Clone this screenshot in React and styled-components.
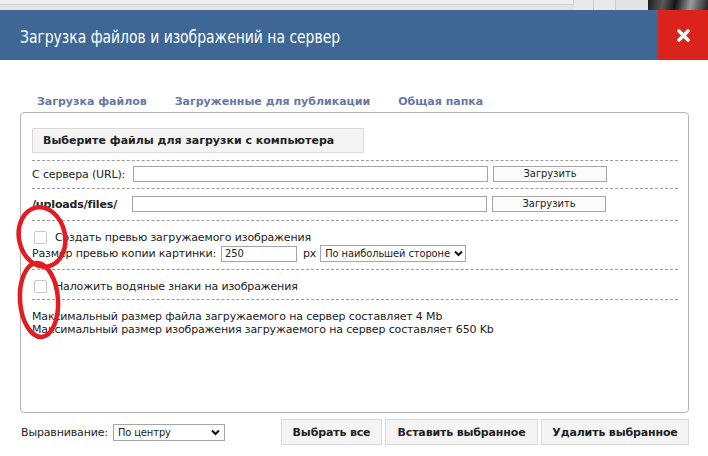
import React from "react";
import styled, { createGlobalStyle } from "styled-components";

const GlobalStyle = createGlobalStyle`
  html, body {
    margin: 0;
    padding: 0;
    background: #ffffff;
  }
  body {
    font-family: "DejaVu Sans", Verdana, sans-serif;
    font-size: 11px;
    letter-spacing: -0.15px;
    color: #222;
  }
`;

const Page = styled.div`
  position: relative;
  width: 708px;
  height: 456px;
  overflow: hidden;
  background: #fff;
`;

// strip of the page behind the dialog
const TopStrip = styled.div`
  display: flex;
  height: 10px;
  background: #e4e4e4;
`;
const StripBox = styled.div`
  width: 573px;
  height: 4px;
  background: #efefef;
  border-bottom: 1px solid #d6d6d6;
  border-right: 1px solid #d6d6d6;
`;
const StripCells = styled.div`
  display: flex;
  flex: 1;
`;
const StripCell = styled.div`
  width: ${(p) => p.w}px;
  border-right: 1px solid #cfcfcf;
  background: #e9e9e9;
`;
const StripImage = styled.div`
  width: 60px;
  margin-left: auto;
  background: linear-gradient(100deg, #1c1c1c 0%, #5a5a5a 25%, #141414 45%, #9a9a9a 70%, #222 100%);
`;

const Header = styled.div`
  display: flex;
  align-items: stretch;
  height: 50px;
  background: #3e6795;
`;
const Title = styled.div`
  flex: 1;
  display: flex;
  align-items: center;
  padding: 2px 0 0 20px;
  color: #fff;
  font-family: "Liberation Sans Narrow", "DejaVu Sans Condensed", sans-serif;
  font-size: 18px;
  letter-spacing: 0;
  span {
    display: inline-block;
    transform: scaleX(0.86);
    transform-origin: left center;
    white-space: nowrap;
  }
`;
const Close = styled.div`
  width: 50px;
  background: #db231b;
  display: flex;
  align-items: center;
  justify-content: center;
`;

const Body = styled.div`
  padding: 0 19px 0 20px;
`;

const Tabs = styled.div`
  display: flex;
  gap: 28px;
  padding: 35px 0 0 17px;
  height: 17px;
`;
const Tab = styled.div`
  font-weight: bold;
  color: #6677a6;
  letter-spacing: 0;
  line-height: 14px;
`;

const Panel = styled.div`
  border: 1px solid #b3b3b3;
  border-radius: 4px;
  padding: 15px 10px 0 11px;
  box-sizing: border-box;
  height: 301px;
`;

const BigButton = styled.button`
  display: flex;
  align-items: center;
  height: ${(p) => p.h || 25}px;
  padding: 0 ${(p) => (p.center ? 0 : 10)}px;
  background: #f4f4f4;
  border: 1px solid #dadada;
  font-family: "DejaVu Sans", Verdana, sans-serif;
  font-size: 11px;
  letter-spacing: ${(p) => (p.center ? "-0.15px" : "0")};
  font-weight: bold;
  color: #222;
  white-space: nowrap;
  width: ${(p) => (p.w ? p.w + "px" : "auto")};
  justify-content: ${(p) => (p.center ? "center" : "flex-start")};
`;

const Section = styled.div`
  border-top: 1px dashed #9c9c9c;
  padding: ${(p) => p.pad};
  margin-top: ${(p) => p.mt || 0}px;
`;

const Row = styled.div`
  display: flex;
  align-items: center;
  height: ${(p) => p.h || 16}px;
`;

const Label = styled.span`
  font-weight: ${(p) => (p.bold ? "bold" : "normal")};
  margin-right: ${(p) => p.mr || 0}px;
  margin-left: ${(p) => p.ml || 0}px;
  width: ${(p) => (p.w ? p.w + "px" : "auto")};
  flex-shrink: 0;
  white-space: nowrap;
`;

const TextInput = styled.div`
  box-sizing: border-box;
  width: ${(p) => p.w}px;
  height: 16px;
  border: 1px solid #a6a6a6;
  background: #fff;
  font-family: "DejaVu Sans Condensed", Tahoma, sans-serif;
  font-size: 11px;
  letter-spacing: 0;
  line-height: 14px;
  padding-left: 3px;
`;

const SmallButton = styled.div`
  box-sizing: border-box;
  width: 114px;
  height: 16px;
  margin-left: 5px;
  border: 1px solid #a6a6a6;
  background: #fbfbfb;
  font-family: "DejaVu Sans Condensed", Tahoma, sans-serif;
  font-size: 11px;
  letter-spacing: 0;
  line-height: 14px;
  text-align: center;
`;

const Select = styled.div`
  box-sizing: border-box;
  display: flex;
  align-items: center;
  justify-content: space-between;
  gap: 4px;
  width: ${(p) => p.w}px;
  height: 17px;
  border: 1px solid #a6a6a6;
  background: #fff;
  padding: 0 4px;
  font-family: "DejaVu Sans Condensed", Tahoma, sans-serif;
  font-size: 11px;
  letter-spacing: -0.1px;
  white-space: nowrap;
`;

const Checkbox = styled.span`
  box-sizing: border-box;
  display: inline-block;
  flex-shrink: 0;
  width: 13px;
  height: 13px;
  margin: 0 8px 0 2px;
  border: 1px solid #c9c9c9;
  border-radius: 2px;
  background: #fff;
`;

const Note = styled.div`
  line-height: 13px;
`;

const Footer = styled.div`
  display: flex;
  align-items: center;
  margin-top: 6px;
  padding-left: 1px;
`;
const FooterButtons = styled.div`
  display: flex;
  gap: 3px;
  margin-left: auto;
`;

const Overlay = styled.svg`
  position: absolute;
  left: 0;
  top: 0;
  pointer-events: none;
`;

const Chevron = () => (
  <svg width="9" height="7" viewBox="0 0 9 7" style={{ flexShrink: 0 }}>
    <path d="M1 1.5 L4.5 5 L8 1.5" fill="none" stroke="#111" strokeWidth="2" />
  </svg>
);

export default function App() {
  return (
    <>
      <GlobalStyle />
      <Page>
        <TopStrip>
          <StripBox />
          <StripCells>
            <StripCell w={19} />
            <StripCell w={21} />
          </StripCells>
          <StripImage />
        </TopStrip>

        <Header>
          <Title>
            <span>Загрузка файлов и изображений на сервер</span>
          </Title>
          <Close>
            <svg width="13" height="13" viewBox="0 0 13 13">
              <path d="M2 2 L11 11 M11 2 L2 11" stroke="#fff" strokeWidth="3.6" strokeLinecap="round" />
            </svg>
          </Close>
        </Header>

        <Body>
          <Tabs>
            <Tab>Загрузка файлов</Tab>
            <Tab>Загруженные для публикации</Tab>
            <Tab>Общая папка</Tab>
          </Tabs>

          <Panel>
            <BigButton w={332}>Выберите файлы для загрузки с компьютера</BigButton>

            <Section mt={7} pad="5px 0 6px">
              <Row>
                <Label w={101}>С сервера (URL):</Label>
                <TextInput w={355} />
                <SmallButton>Загрузить</SmallButton>
              </Row>
            </Section>

            <Section pad="7px 0 8px">
              <Row>
                <Label bold w={100}>/uploads/files/</Label>
                <TextInput w={355} />
                <SmallButton>Загрузить</SmallButton>
              </Row>
            </Section>

            <Section pad="9px 0 6px">
              <Row h={14}>
                <Checkbox />
                <Label>Создать превью загружаемого изображения</Label>
              </Row>
              <Row h={19}>
                <Label w={189}>Размер превью копии картинки:</Label>
                <TextInput w={76}>250</TextInput>
                <Label ml={6} mr={4}>px</Label>
                <Select w={146}>
                  <span>По наибольшей стороне</span>
                  <Chevron />
                </Select>
              </Row>
            </Section>

            <Section pad="10px 0 6px">
              <Row h={13}>
                <Checkbox />
                <Label>Наложить водяные знаки на изображения</Label>
              </Row>
            </Section>

            <Section pad="10px 0 0">
              <Note>Максимальный размер файла загружаемого на сервер составляет 4 Mb</Note>
              <Note>Максимальный размер изображения загружаемого на сервер составляет 650 Kb</Note>
            </Section>
          </Panel>

          <Footer>
            <Label mr={5}>Выравнивание:</Label>
            <Select w={112}>
              <span>По центру</span>
              <Chevron />
            </Select>
            <FooterButtons>
              <BigButton h={26} w={101} center>Выбрать все</BigButton>
              <BigButton h={26} w={153} center>Вставить выбранное</BigButton>
              <BigButton h={26} w={148} center>Удалить выбранное</BigButton>
            </FooterButtons>
          </Footer>
        </Body>

        <Overlay width="708" height="456" viewBox="0 0 708 456">
          <ellipse cx="42" cy="237" rx="23" ry="30" transform="rotate(-12 42 237)" fill="none" stroke="#e31b23" strokeWidth="4.5" />
          <ellipse cx="39" cy="300" rx="19" ry="37" transform="rotate(-4 39 300)" fill="none" stroke="#e31b23" strokeWidth="4.5" />
        </Overlay>
      </Page>
    </>
  );
}
